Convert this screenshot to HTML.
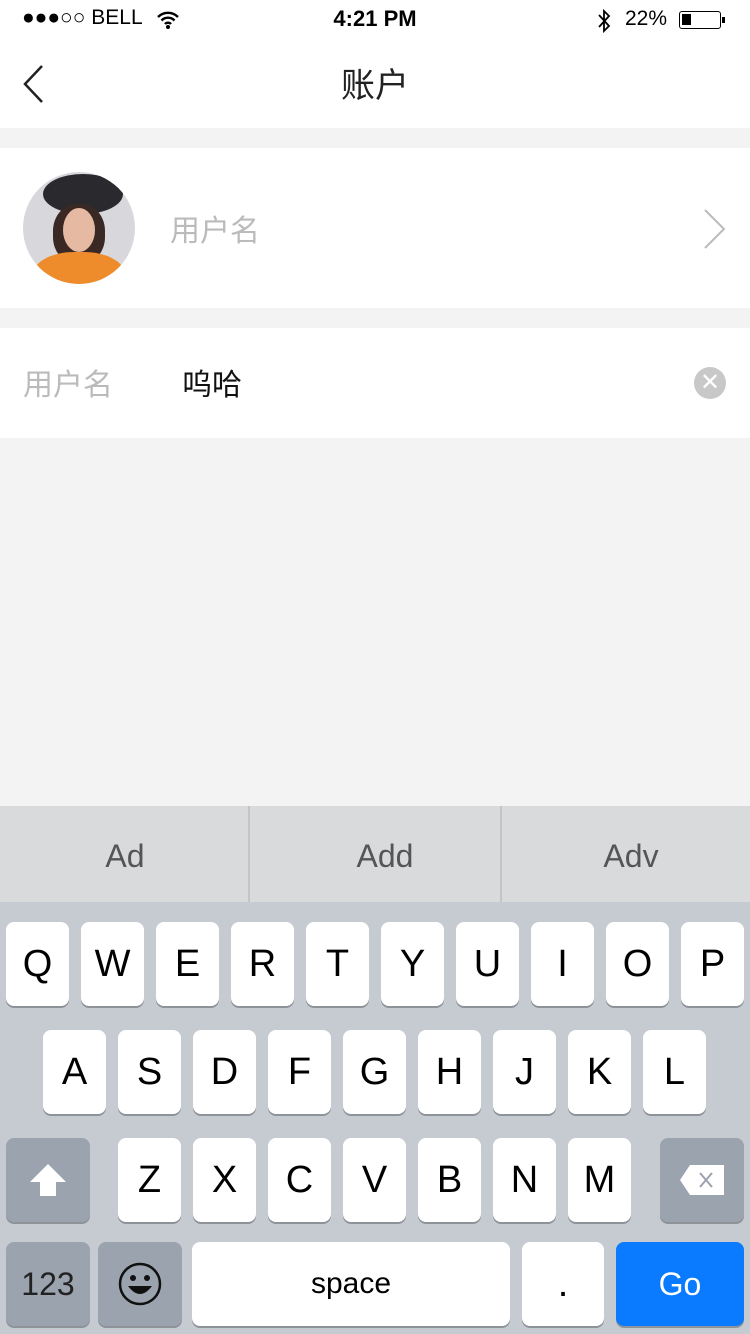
<!DOCTYPE html>
<html><head><meta charset="utf-8"><style>
*{margin:0;padding:0;box-sizing:border-box}
body{width:750px;height:1334px;background:#f3f3f3;font-family:"Liberation Sans","Noto Sans CJK SC",sans-serif;position:relative;overflow:hidden}
.abs{position:absolute}
.key{position:absolute;background:#fff;border-radius:8px;box-shadow:0 2px 0 #8e939a;font-size:38px;color:#000;display:flex;align-items:center;justify-content:center;width:63px;height:84px}
.sp{background:#9aa3ae}
</style></head><body>
<div class="abs" style="left:0;top:0;width:750px;height:128px;background:#fff"></div>
<div class="abs" style="left:22px;top:6px;font-size:21px;color:#000">●●●○○ BELL</div>
<svg class="abs" style="left:156px;top:10px" width="24" height="20" viewBox="0 0 24 20"><path d="M2 7a14 14 0 0 1 20 0M5.5 10.5a9 9 0 0 1 13 0M9 14a4 4 0 0 1 6 0" stroke="#000" stroke-width="2.4" fill="none"/><circle cx="12" cy="17" r="2" fill="#000"/></svg>
<div class="abs" style="left:0;width:750px;top:6px;text-align:center;font-size:22px;font-weight:bold">4:21 PM</div>
<svg class="abs" style="left:596px;top:8px" width="16" height="26" viewBox="0 0 16 26"><path d="M3 7L13 18L8 23V3L13 8L3 19" stroke="#000" stroke-width="1.8" fill="none"/></svg>
<div class="abs" style="left:625px;top:7px;font-size:21px">22%</div>
<div class="abs" style="left:679px;top:11px;width:42px;height:18px;border:1.5px solid #000;border-radius:3px"><div style="margin:2px;width:9px;height:11px;background:#000"></div></div>
<div class="abs" style="left:722px;top:17px;width:3px;height:6px;background:#000"></div>
<svg class="abs" style="left:20px;top:64px" width="26" height="40"><path d="M22 2L5 20L22 38" stroke="#222" stroke-width="2.5" fill="none"/></svg>
<div class="abs" style="left:0;width:750px;top:58px;text-align:center;font-size:34px;color:#222">账户</div>

<div class="abs" style="left:0;top:148px;width:750px;height:160px;background:#fff"></div>
<div class="abs" style="left:23px;top:172px;width:112px;height:112px;border-radius:50%;overflow:hidden;background:#d8d8dc">
<div class="abs" style="left:20px;top:2px;width:80px;height:40px;border-radius:50%;background:#2a2a2e"></div>
<div class="abs" style="left:30px;top:32px;width:52px;height:60px;border-radius:45%;background:#3a2824"></div>
<div class="abs" style="left:40px;top:36px;width:32px;height:44px;border-radius:50%;background:#e6b9a3"></div>
<div class="abs" style="left:10px;top:80px;width:92px;height:50px;border-radius:45%;background:#ee8b2a"></div>
</div>
<div class="abs" style="left:170px;top:206px;font-size:30px;color:#bbb">用户名</div>
<svg class="abs" style="left:702px;top:208px" width="26" height="42"><path d="M3 2L22 21L3 40" stroke="#bbb" stroke-width="2" fill="none"/></svg>

<div class="abs" style="left:0;top:328px;width:750px;height:110px;background:#fff"></div>
<div class="abs" style="left:23px;top:360px;font-size:30px;color:#bbb">用户名</div>
<div class="abs" style="left:182px;top:360px;font-size:30px;color:#111">呜哈</div>
<div class="abs" style="left:694px;top:367px;width:32px;height:32px;border-radius:50%;background:#c8c8c8;color:#fff;font-size:24px;line-height:31px;text-align:center">✕</div>

<div class="abs" style="left:0;top:806px;width:750px;height:96px;background:#d9dadc"></div>
<div class="abs" style="left:248px;top:806px;width:2px;height:96px;background:#c2c4c8"></div>
<div class="abs" style="left:500px;top:806px;width:2px;height:96px;background:#c2c4c8"></div>
<div class="abs" style="left:0;width:250px;top:838px;text-align:center;font-size:32px;color:#555">Ad</div>
<div class="abs" style="left:260px;width:250px;top:838px;text-align:center;font-size:32px;color:#555">Add</div>
<div class="abs" style="left:506px;width:250px;top:838px;text-align:center;font-size:32px;color:#555">Adv</div>
<div class="abs" style="left:0;top:902px;width:750px;height:432px;background:#c6cad1"></div>

<div class="key" style="left:6px;top:922px">Q</div><div class="key" style="left:81px;top:922px">W</div><div class="key" style="left:156px;top:922px">E</div><div class="key" style="left:231px;top:922px">R</div><div class="key" style="left:306px;top:922px">T</div><div class="key" style="left:381px;top:922px">Y</div><div class="key" style="left:456px;top:922px">U</div><div class="key" style="left:531px;top:922px">I</div><div class="key" style="left:606px;top:922px">O</div><div class="key" style="left:681px;top:922px">P</div>
<div class="key" style="left:43px;top:1030px">A</div><div class="key" style="left:118px;top:1030px">S</div><div class="key" style="left:193px;top:1030px">D</div><div class="key" style="left:268px;top:1030px">F</div><div class="key" style="left:343px;top:1030px">G</div><div class="key" style="left:418px;top:1030px">H</div><div class="key" style="left:493px;top:1030px">J</div><div class="key" style="left:568px;top:1030px">K</div><div class="key" style="left:643px;top:1030px">L</div>
<div class="key sp" style="left:6px;top:1138px;width:84px"><svg width="40" height="36"><path d="M20 2L38 20H28V34H12V20H2Z" fill="#fff"/></svg></div>
<div class="key" style="left:118px;top:1138px">Z</div><div class="key" style="left:193px;top:1138px">X</div><div class="key" style="left:268px;top:1138px">C</div><div class="key" style="left:343px;top:1138px">V</div><div class="key" style="left:418px;top:1138px">B</div><div class="key" style="left:493px;top:1138px">N</div><div class="key" style="left:568px;top:1138px">M</div>
<div class="key sp" style="left:660px;top:1138px;width:84px"><svg width="48" height="34"><path d="M12 2H46V32H12L2 17Z" fill="#fff"/><path d="M22 10L34 24M34 10L22 24" stroke="#9aa3ae" stroke-width="2"/></svg></div>
<div class="key sp" style="left:6px;top:1242px;width:84px;font-size:32px;color:#222">123</div>
<div class="key sp" style="left:98px;top:1242px;width:84px"><svg width="44" height="44"><circle cx="22" cy="22" r="20" stroke="#111" stroke-width="2.5" fill="none"/><circle cx="15" cy="16" r="3" fill="#111"/><circle cx="29" cy="16" r="3" fill="#111"/><path d="M10 24Q22 40 34 24Z" fill="#111"/></svg></div>
<div class="key" style="left:192px;top:1242px;width:318px;font-size:30px">space</div>
<div class="key" style="left:522px;top:1242px;width:82px">.</div>
<div class="key" style="left:616px;top:1242px;width:128px;background:#0a7aff;color:#fff;font-size:32px">Go</div>
</body></html>
